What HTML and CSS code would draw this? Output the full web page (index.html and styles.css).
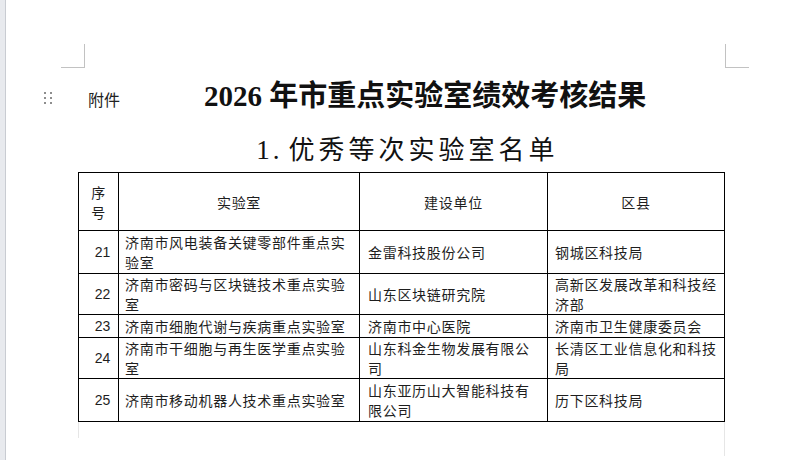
FILE: index.html
```html
<!DOCTYPE html>
<html lang="zh-CN">
<head>
<meta charset="utf-8">
<title>2026年市重点实验室绩效考核结果</title>
<link rel="stylesheet" href="styles.css">
</head>
<body>
<div class="app">
  <div class="rail"></div>
  <div class="page">
    <div class="marks">
      <div class="mark mark-l"></div>
      <div class="mark mark-r"></div>
    </div>
    <div class="title-row">
      <div class="handle"><i></i><i></i><i></i><i></i><i></i><i></i></div>
      <span class="attach">附件</span>
      <h1 class="title"><span class="num">2026</span> 年市重点实验室绩效考核结果</h1>
    </div>
    <h2 class="subtitle"><span class="num">1.</span>优秀等次实验室名单</h2>
    <table class="grid">
      <colgroup>
        <col class="c1"><col class="c2"><col class="c3"><col class="c4">
      </colgroup>
      <thead>
        <tr class="head">
          <th class="idx-h">序号</th>
          <th>实验室</th>
          <th>建设单位</th>
          <th>区县</th>
        </tr>
      </thead>
      <tbody>
        <tr>
          <td class="idx">21</td>
          <td class="lab">济南市风电装备关键零部件重点实验室</td>
          <td class="org">金雷科技股份公司</td>
          <td class="dist">钢城区科技局</td>
        </tr>
        <tr class="tight">
          <td class="idx">22</td>
          <td class="lab">济南市密码与区块链技术重点实验室</td>
          <td class="org">山东区块链研究院</td>
          <td class="dist">高新区发展改革和科技经济部</td>
        </tr>
        <tr>
          <td class="idx">23</td>
          <td class="lab">济南市细胞代谢与疾病重点实验室</td>
          <td class="org">济南市中心医院</td>
          <td class="dist">济南市卫生健康委员会</td>
        </tr>
        <tr class="tight">
          <td class="idx">24</td>
          <td class="lab">济南市干细胞与再生医学重点实验室</td>
          <td class="org">山东科金生物发展有限公司</td>
          <td class="dist">长清区工业信息化和科技局</td>
        </tr>
        <tr>
          <td class="idx">25</td>
          <td class="lab">济南市移动机器人技术重点实验室</td>
          <td class="org">山东亚历山大智能科技有限公司</td>
          <td class="dist">历下区科技局</td>
        </tr>
      </tbody>
    </table>
    <div class="below">
      <span class="edge edge-l"></span>
      <span class="edge edge-r"></span>
    </div>
  </div>
</div>
</body>
</html>
```
FILE: styles.css
```css
* { box-sizing: border-box; }
html, body {
  margin: 0;
  padding: 0;
  background: #fff;
}
body {
  font-family: "Noto Sans CJK SC", "Liberation Sans", sans-serif;
  color: #1a1a1a;
}
.app {
  display: flex;
  width: 797px;
  height: 460px;
  overflow: hidden;
}
.rail {
  width: 6px;
  flex: none;
  background: #e8eaee;
  border-right: 1px solid #c9ccd2;
}
.page {
  flex: 1;
  padding-top: 44px;
}
.marks {
  display: flex;
  justify-content: space-between;
  margin-left: 55px;
  width: 688px;
}
.mark {
  width: 24px;
  height: 24px;
  border-bottom: 1px solid #c2c2c2;
}
.mark-l { border-right: 1px solid #c2c2c2; }
.mark-r { border-left: 1px solid #c2c2c2; }

.title-row {
  display: flex;
  align-items: center;
  height: 44px;
  margin-top: 6px;
}
.handle {
  display: grid;
  grid-template-columns: 2px 2px;
  column-gap: 4px;
  row-gap: 3px;
  margin-left: 38px;
  margin-top: 4px;
}
.handle i {
  display: block;
  width: 2px;
  height: 2px;
  background: #8e8e8e;
}
.attach {
  margin-left: 36px;
  margin-top: 6px;
  font-size: 16px;
  line-height: 20px;
  color: #222;
}
.title {
  margin: 0 0 0 84px;
  font-family: "Liberation Serif", "Noto Sans CJK SC", serif;
  font-weight: 700;
  font-size: 29px;
  line-height: 40px;
  color: #111;
  white-space: nowrap;
}
.title .num { font-family: "Liberation Serif", serif; }

.subtitle {
  margin: 11px 0 0 0;
  padding-left: 79px;
  width: 724px;
  text-align: center;
  font-family: "Noto Sans CJK SC", sans-serif;
  font-weight: 400;
  font-size: 26px;
  line-height: 38px;
  letter-spacing: 4px;
  color: #111;
  white-space: nowrap;
}
.subtitle .num {
  font-family: "Liberation Serif", serif;
  font-size: 27px;
  letter-spacing: 3px;
  margin-right: 6px;
}

.grid {
  margin: 3px 0 0 72px;
  width: 646px;
  border-collapse: collapse;
  table-layout: fixed;
  font-size: 14px;
  line-height: 20px;
  letter-spacing: 0.7px;
  color: #1e1e1e;
}
.c1 { width: 40px; }
.c2 { width: 241px; }
.c3 { width: 188px; }
.c4 { width: 177px; }
.grid th,
.grid td {
  border: 1px solid #000;
  padding: 1px 6px;
  vertical-align: middle;
  text-align: left;
  font-weight: 400;
}
.grid th { text-align: center; }
.head th { height: 58px; }
.grid th.idx-h { padding: 0 6px; }
.grid td.idx {
  font-family: "Liberation Sans", sans-serif;
  letter-spacing: 0;
  text-align: center;
  padding-left: 8px;
  padding-right: 0;
}
.grid td.lab { padding-left: 6px; padding-right: 6px; }
.grid td.org { padding-left: 8px; padding-right: 8px; }
.grid td.dist { padding-left: 7px; padding-right: 4px; }
.grid tr.tight td { padding-top: 0; padding-bottom: 0; }

.below {
  display: flex;
  justify-content: space-between;
  margin-left: 72px;
  width: 647px;
}
.edge {
  display: block;
  width: 1px;
  background: #e6e6e6;
}
.edge-l { height: 16px; }
.edge-r { height: 34px; }
```
